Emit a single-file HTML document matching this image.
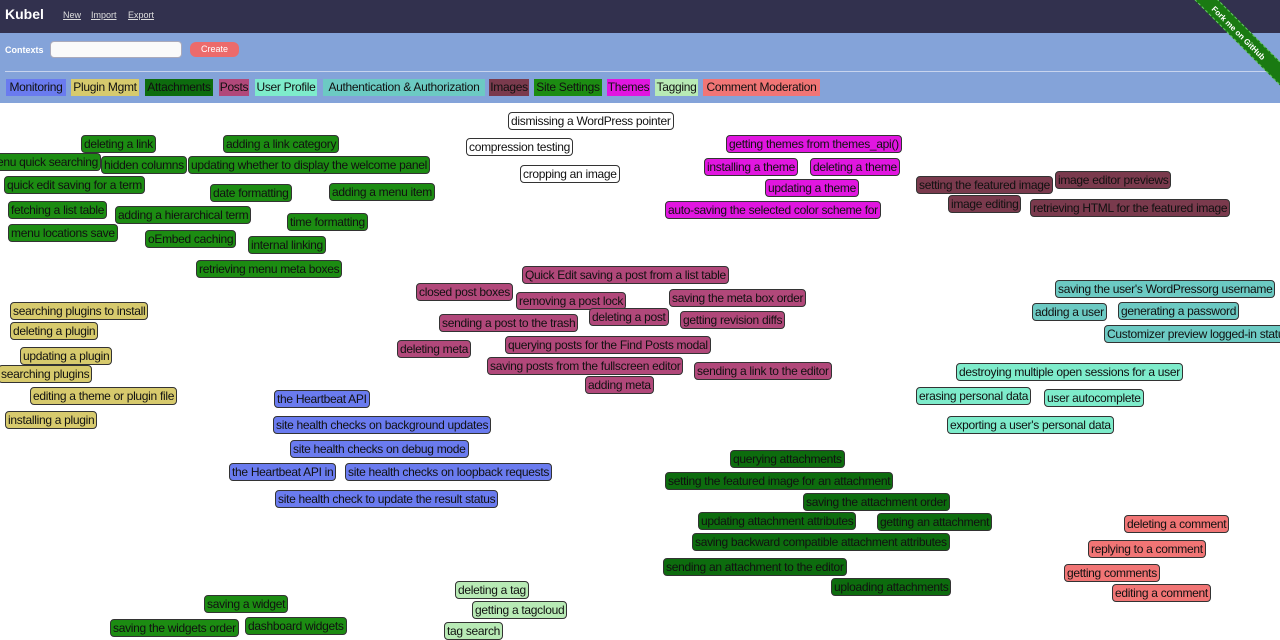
<!DOCTYPE html>
<html><head><meta charset="utf-8"><style>
*{box-sizing:border-box;margin:0;padding:0}
body{width:1280px;height:640px;overflow:hidden;background:#fff;font-family:"Liberation Sans",sans-serif;position:relative}
.hd{position:absolute;left:0;top:0;width:1280px;height:33px;background:#32314e}
.hd .logo{position:absolute;left:5px;top:6px;color:#fff;font-weight:bold;font-size:14px}
.hd a{position:absolute;top:10px;color:#ddd;font-size:9px;text-decoration:underline}
.band{position:absolute;left:0;top:33px;width:1280px;height:70px;background:#84a3d9}
.band .ctx{position:absolute;left:5px;top:12px;color:#fff;font-weight:bold;font-size:9px}
.band input{position:absolute;left:50px;top:8px;width:132px;height:17px;border:1px solid #aab;border-radius:4px;background:#fafafa}
.band .btn{position:absolute;left:190px;top:9px;width:49px;height:15px;background:#ec6b6b;border-radius:6px;color:#fff;font-size:9px;text-align:center;line-height:15px}
.band hr{position:absolute;left:5px;top:38px;width:1275px;border:0;border-top:1px solid #c8d4ee}
.leg{position:absolute;top:79px;height:17px;font-size:12px;line-height:17px;color:#111;text-align:center;white-space:nowrap;overflow:hidden;letter-spacing:-0.3px}
.t{position:absolute;height:18px;font-size:12px;letter-spacing:-0.3px;line-height:16px;padding:0 2px;border:1px solid #333;border-radius:4px;color:#111;white-space:nowrap}
.g{background:#1c8c12}.w{background:#fff}.th{background:#e116e0}.im{background:#7a3a4d}.po{background:#b1487a}
.pl{background:#d7ca6d}.mo{background:#6a7bef}.au{background:#6ccac3}.up{background:#7eeccb}.at{background:#0d6c0e}.tg{background:#b8eab5}.cm{background:#f17575}
.rib{position:absolute;right:-34px;top:24px;width:150px;height:17px;background:#1a7a12;color:#fff;font-size:8px;font-weight:bold;text-align:center;line-height:17px;transform:rotate(45deg);border-top:1px dashed #6c6;border-bottom:1px dashed #6c6}
</style></head><body>
<div class="hd"><div class="logo">Kubel</div><a style="left:63px">New</a><a style="left:91px">Import</a><a style="left:128px">Export</a></div>
<div class="band"><div class="ctx">Contexts</div><input><div class="btn">Create</div><hr></div>
<div class="rib">Fork me on GitHub</div>
<div class="leg mo" style="left:6px;width:60px">Monitoring</div>
<div class="leg pl" style="left:71px;width:68px">Plugin Mgmt</div>
<div class="leg at" style="left:145px;width:68px">Attachments</div>
<div class="leg po" style="left:219px;width:30px">Posts</div>
<div class="leg up" style="left:255px;width:62px">User Profile</div>
<div class="leg au" style="left:323px;width:162px">Authentication &amp; Authorization</div>
<div class="leg im" style="left:489px;width:40px">Images</div>
<div class="leg g" style="left:534px;width:68px">Site Settings</div>
<div class="leg th" style="left:607px;width:43px">Themes</div>
<div class="leg tg" style="left:655px;width:43px">Tagging</div>
<div class="leg cm" style="left:703px;width:117px">Comment Moderation</div>

<div class="t g" style="left:81px;top:135px">deleting a link</div>
<div class="t g" style="left:223px;top:135px">adding a link category</div>
<div class="t g" style="left:-6px;top:153px">enu quick searching</div>
<div class="t g" style="left:101px;top:156px">hidden columns</div>
<div class="t g" style="left:188px;top:156px">updating whether to display the welcome panel</div>
<div class="t g" style="left:4px;top:176px">quick edit saving for a term</div>
<div class="t g" style="left:210px;top:184px">date formatting</div>
<div class="t g" style="left:329px;top:183px">adding a menu item</div>
<div class="t g" style="left:8px;top:201px">fetching a list table</div>
<div class="t g" style="left:115px;top:206px">adding a hierarchical term</div>
<div class="t g" style="left:287px;top:213px">time formatting</div>
<div class="t g" style="left:8px;top:224px">menu locations save</div>
<div class="t g" style="left:145px;top:230px">oEmbed caching</div>
<div class="t g" style="left:248px;top:236px">internal linking</div>
<div class="t g" style="left:196px;top:260px">retrieving menu meta boxes</div>
<div class="t g" style="left:204px;top:595px">saving a widget</div>
<div class="t g" style="left:110px;top:619px">saving the widgets order</div>
<div class="t g" style="left:245px;top:617px">dashboard widgets</div>

<div class="t w" style="left:508px;top:112px">dismissing a WordPress pointer</div>
<div class="t w" style="left:466px;top:138px">compression testing</div>
<div class="t w" style="left:520px;top:165px">cropping an image</div>

<div class="t th" style="left:726px;top:135px">getting themes from themes_api()</div>
<div class="t th" style="left:704px;top:158px">installing a theme</div>
<div class="t th" style="left:810px;top:158px">deleting a theme</div>
<div class="t th" style="left:765px;top:179px">updating a theme</div>
<div class="t th" style="left:665px;top:201px">auto-saving the selected color scheme for</div>

<div class="t im" style="left:916px;top:176px">setting the featured image</div>
<div class="t im" style="left:1055px;top:171px">image editor previews</div>
<div class="t im" style="left:948px;top:195px">image editing</div>
<div class="t im" style="left:1030px;top:199px">retrieving HTML for the featured image</div>

<div class="t po" style="left:522px;top:266px">Quick Edit saving a post from a list table</div>
<div class="t po" style="left:416px;top:283px">closed post boxes</div>
<div class="t po" style="left:516px;top:292px">removing a post lock</div>
<div class="t po" style="left:669px;top:289px">saving the meta box order</div>
<div class="t po" style="left:439px;top:314px">sending a post to the trash</div>
<div class="t po" style="left:589px;top:308px">deleting a post</div>
<div class="t po" style="left:680px;top:311px">getting revision diffs</div>
<div class="t po" style="left:397px;top:340px">deleting meta</div>
<div class="t po" style="left:505px;top:336px">querying posts for the Find Posts modal</div>
<div class="t po" style="left:487px;top:357px">saving posts from the fullscreen editor</div>
<div class="t po" style="left:694px;top:362px">sending a link to the editor</div>
<div class="t po" style="left:585px;top:376px">adding meta</div>

<div class="t pl" style="left:10px;top:302px">searching plugins to install</div>
<div class="t pl" style="left:10px;top:322px">deleting a plugin</div>
<div class="t pl" style="left:20px;top:347px">updating a plugin</div>
<div class="t pl" style="left:-2px;top:365px">searching plugins</div>
<div class="t pl" style="left:30px;top:387px">editing a theme or plugin file</div>
<div class="t pl" style="left:5px;top:411px">installing a plugin</div>

<div class="t mo" style="left:274px;top:390px">the Heartbeat API</div>
<div class="t mo" style="left:273px;top:416px">site health checks on background updates</div>
<div class="t mo" style="left:290px;top:440px">site health checks on debug mode</div>
<div class="t mo" style="left:229px;top:463px">the Heartbeat API in</div>
<div class="t mo" style="left:345px;top:463px">site health checks on loopback requests</div>
<div class="t mo" style="left:275px;top:490px">site health check to update the result status</div>

<div class="t au" style="left:1055px;top:280px">saving the user's WordPressorg username</div>
<div class="t au" style="left:1032px;top:303px">adding a user</div>
<div class="t au" style="left:1118px;top:302px">generating a password</div>
<div class="t au" style="left:1104px;top:325px">Customizer preview logged-in status</div>
<div class="t up" style="left:956px;top:363px">destroying multiple open sessions for a user</div>
<div class="t up" style="left:916px;top:387px">erasing personal data</div>
<div class="t up" style="left:1044px;top:389px">user autocomplete</div>
<div class="t up" style="left:947px;top:416px">exporting a user's personal data</div>

<div class="t at" style="left:730px;top:450px">querying attachments</div>
<div class="t at" style="left:665px;top:472px">setting the featured image for an attachment</div>
<div class="t at" style="left:803px;top:493px">saving the attachment order</div>
<div class="t at" style="left:698px;top:512px">updating attachment attributes</div>
<div class="t at" style="left:877px;top:513px">getting an attachment</div>
<div class="t at" style="left:692px;top:533px">saving backward compatible attachment attributes</div>
<div class="t at" style="left:663px;top:558px">sending an attachment to the editor</div>
<div class="t at" style="left:831px;top:578px">uploading attachments</div>

<div class="t tg" style="left:455px;top:581px">deleting a tag</div>
<div class="t tg" style="left:472px;top:601px">getting a tagcloud</div>
<div class="t tg" style="left:444px;top:622px">tag search</div>

<div class="t cm" style="left:1124px;top:515px">deleting a comment</div>
<div class="t cm" style="left:1088px;top:540px">replying to a comment</div>
<div class="t cm" style="left:1064px;top:564px">getting comments</div>
<div class="t cm" style="left:1112px;top:584px">editing a comment</div>
</body></html>
